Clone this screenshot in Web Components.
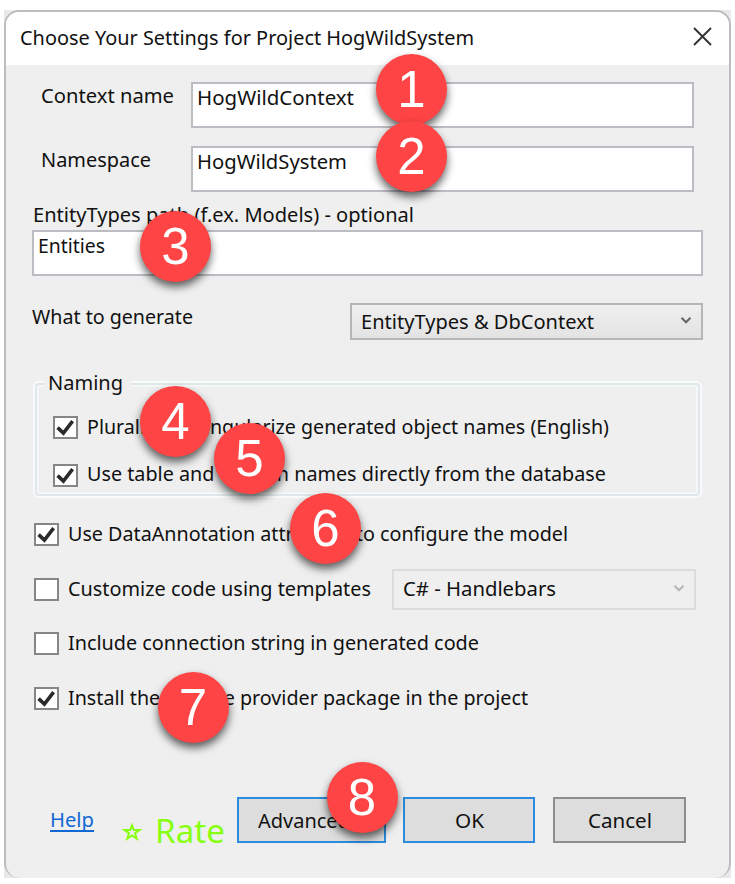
<!DOCTYPE html>
<html lang="en">
<head>
<meta charset="utf-8">
<title>Choose Your Settings</title>
<style>
html,body{margin:0;padding:0;background:#fff}
body{width:735px;height:884px;overflow:hidden;font-family:"Noto Sans","Open Sans",sans-serif;font-size:19.5px;color:#111}
</style>
</head>
<body>
<settings-dialog></settings-dialog>
<script>
const define = (name, html, setup) => {
  const t = document.createElement('template');
  t.innerHTML = html;
  customElements.define(name, class extends HTMLElement {
    connectedCallback() {
      if (this.shadowRoot) return;
      this.attachShadow({mode: 'open'}).append(t.content.cloneNode(true));
      if (setup) setup(this, this.shadowRoot);
    }
  });
};

/* One line of text, condensed or widened to the width given by w */
define('fit-text', `<style>
:host{display:block;flex:none;height:26px;line-height:26px;white-space:nowrap}
span{display:inline-block;transform-origin:0 50%}
</style><span><slot></slot></span>`, (el, root) => {
  const w = +el.getAttribute('w'), s = root.querySelector('span');
  el.style.width = w + 'px';
  s.style.transform = `scaleX(${w / s.getBoundingClientRect().width})`;
});

define('text-box', `<style>
:host{display:block;box-sizing:border-box;height:46px;border:2px solid #bcbcc3;background:#fff;padding:1px 0 0 4px}
</style><slot></slot>`);

define('combo-box', `<style>
:host{display:flex;box-sizing:border-box;align-items:center;justify-content:space-between;border:2px solid #b6b6b6;background:linear-gradient(#efefef,#e3e3e3);padding:0 9px 0 9px;color:#111}
:host([disabled]){border-color:#dcdcdc;background:#efefef}
:host([disabled]) path{stroke:#b8b8b8}
svg{flex:none;margin-top:-2px}
</style><slot></slot><svg width="12" height="9" viewBox="0 0 12 9"><path d="M1.5 1.8L6 6.3L10.5 1.8" fill="none" stroke="#686868" stroke-width="2.1"/></svg>`);

define('check-box', `<style>
:host{display:flex;align-items:flex-start;height:26px}
i{box-sizing:border-box;flex:none;width:25px;height:23px;border:2px solid #868686;background:#fff;margin-right:9px}
svg{display:none}
:host([checked]) svg{display:block}
</style><i><svg width="21" height="19" viewBox="0 0 21 19"><path d="M2.6 9.6L8.4 15L17.6 3.2" fill="none" stroke="#2a2a2a" stroke-width="3.6"/></svg></i><slot></slot>`);

define('push-button', `<style>
:host{display:flex;box-sizing:border-box;height:46px;border:2px solid #8c8c8c;background:#ddd;align-items:center;justify-content:center}
:host([primary]){border-color:#2b8bdc}
fit-text,::slotted(*){margin-top:2px}
</style><slot></slot>`);

define('group-box', `<style>
:host{display:block;box-sizing:border-box;width:669px;height:117px;border:2px solid #f9fbfb;border-radius:6px}
.in{box-sizing:border-box;height:113px;border:2px solid #dfe7ea;border-radius:4px;box-shadow:inset 0 0 0 1.5px #f8fafa;padding:0 0 0 16px}
.cap{background:#efefef;width:87px;height:26px;margin:-15px 0 0 -9px;box-sizing:border-box;padding-left:4px}
</style><div class="in"><div class="cap"><slot name="caption"></slot></div><slot></slot></div>`);

define('title-bar', `<style>
:host{display:flex;height:53px;background:#fff;align-items:flex-start;justify-content:space-between;padding:13px 17px 0 14px;box-sizing:border-box}
svg{margin-top:2px}
</style><slot></slot><svg width="19" height="19" viewBox="0 0 19 19"><path d="M1 1L18 18M18 1L1 18" stroke="#333" stroke-width="1.9" fill="none"/></svg>`);

define('step-badge', `<style>
:host{position:absolute;box-sizing:border-box;width:71px;height:71px;border-radius:50%;background:#fe4444;color:#fff;font:51px/71px "Liberation Sans",Arial,sans-serif;text-align:center;box-shadow:0 5px 8px rgba(0,0,0,.62)}
</style><slot></slot>`, el => {
  const [x, y] = el.getAttribute('at').split(',').map(Number);
  el.style.left = x - 35.5 + 'px';
  el.style.top = y - 35.5 + 'px';
});

define('settings-dialog', `<style>
:host{display:block;position:relative;width:735px;height:884px;box-sizing:border-box;padding:10px 4px 0 4px;overflow:hidden}
.back{background:#e9e9ea;height:868px}
.win{box-sizing:border-box;height:868px;border:2px solid #bdbdbd;border-bottom:0;border-radius:15px;background:#efefef;overflow:hidden}
.body{padding:17px 25px 0 26px;display:flex;flex-direction:column}
.row{display:flex;align-items:flex-start;justify-content:space-between}
.field{padding:0 0 0 9px;width:662px;box-sizing:border-box;margin-bottom:18px}
.field text-box{width:503px}
.foot{display:flex;align-items:flex-start;margin-top:84px;padding-left:18px}
a{color:#1268d3;margin-top:10px}
.u{height:2px;background:#1268d3;margin-top:-3px}
.rate{display:flex;color:#8f1;font-size:32px}
.rate svg{margin:26px 13px 0 28px}
.rate fit-text{margin-top:21px}
</style>
<div class="back"><div class="win">
<title-bar><fit-text w="454">Choose Your Settings for Project HogWildSystem</fit-text></title-bar>
<div class="body">
<div class="row field"><fit-text w="133" style="margin-top:1px">Context name</fit-text><text-box><fit-text w="157">HogWildContext</fit-text></text-box></div>
<div class="row field"><fit-text w="110" style="margin-top:1px">Namespace</fit-text><text-box><fit-text w="150">HogWildSystem</fit-text></text-box></div>
<fit-text w="381" style="margin:-8px 0 0 .5px">EntityTypes path (f.ex. Models) - optional</fit-text>
<text-box style="margin-top:2px;width:671px"><fit-text w="67">Entities</fit-text></text-box>
<div class="row" style="margin-top:27px;width:671px"><fit-text w="161" style="margin-top:1px">What to generate</fit-text><combo-box style="width:353px;height:37px"><fit-text w="233">EntityTypes &amp; DbContext</fit-text></combo-box></div>
<group-box style="margin:41px 0 0 1px"><fit-text slot="caption" w="75">Naming</fit-text>
<check-box checked style="margin-top:20px"><fit-text w="522" style="margin-top:-2px">Pluralize or singularize generated object names (English)</fit-text></check-box>
<check-box checked style="margin-top:22px"><fit-text w="519" style="margin-top:-3px">Use table and column names directly from the database</fit-text></check-box>
</group-box>
<check-box checked style="margin:25px 0 0 2px"><fit-text w="500" style="margin-top:-2px">Use DataAnnotation attributes to configure the model</fit-text></check-box>
<div class="row" style="margin:20px 0 0 2px;height:41px;width:662px"><check-box style="margin-top:9px"><fit-text w="303" style="margin-top:-2px">Customize code using templates</fit-text></check-box><combo-box disabled style="width:304px;height:41px"><fit-text w="153" style="margin-top:-2px">C# - Handlebars</fit-text></combo-box></div>
<check-box style="margin:22px 0 0 2px"><fit-text w="411" style="margin-top:-2px">Include connection string in generated code</fit-text></check-box>
<check-box checked style="margin:29px 0 0 2px"><fit-text w="460" style="margin-top:-2px">Install the EF Core provider package in the project</fit-text></check-box>
<div class="foot"><a><fit-text w="44">Help</fit-text><div class="u"></div></a>
<div class="rate"><svg width="20" height="18" viewBox="0 0 20 18"><path d="M10 2.2L11.8 7H17.5L13 10.2L14.8 15.5L10 12.4L5.2 15.5L7 10.2L2.5 7H8.2Z" fill="none" stroke="#8f1" stroke-width="2"/></svg><fit-text w="70">Rate</fit-text></div>
<push-button primary style="width:149px;margin-left:12px"><fit-text w="108">Advanced...</fit-text></push-button>
<push-button primary style="width:132px;margin-left:17px"><fit-text w="29">OK</fit-text></push-button>
<push-button style="width:133px;margin-left:18px"><fit-text w="64">Cancel</fit-text></push-button></div>
</div></div></div>
<step-badge at="411.5,89.5">1</step-badge>
<step-badge at="411.5,156.5">2</step-badge>
<step-badge at="175.5,246.5">3</step-badge>
<step-badge at="175.5,421.5">4</step-badge>
<step-badge at="249.5,458.5">5</step-badge>
<step-badge at="325.5,528.5">6</step-badge>
<step-badge at="193,707.5">7</step-badge>
<step-badge at="362,797">8</step-badge>`);
</script>
</body>
</html>
